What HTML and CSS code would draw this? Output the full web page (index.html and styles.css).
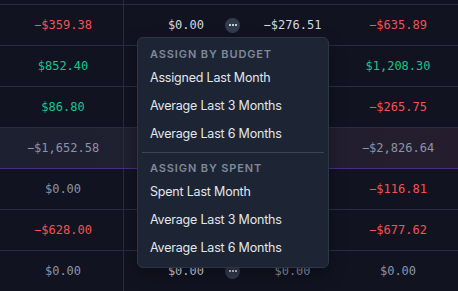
FILE: index.html
```html
<!DOCTYPE html>
<html lang="en">
<head>
    <meta charset="UTF-8">
    <meta name="viewport" content="width=device-width, initial-scale=1.0">
    <title>Budget</title>
    <link rel="stylesheet" href="styles.css">
</head>
<body>
    <div class="budget">
        <div class="row row-stub">
            <div class="cell cell-cat"></div><div class="cell"></div><div class="cell"></div><div class="cell"></div>
        </div>
        <div class="row">
            <div class="cell cell-cat amt neg">−$359.38</div>
            <div class="cell cell-assign">
                <span class="amt light">$0.00</span>
                <button class="more"><svg width="8" height="2" viewBox="0 0 8 2"><rect x="0" y="0" width="2" height="2"/><rect x="3" y="0" width="2" height="2"/><rect x="6" y="0" width="2" height="2"/></svg></button>
            </div>
            <div class="cell cell-act amt light">−$276.51</div>
            <div class="cell cell-avail amt neg">−$635.89</div>
        </div>
        <div class="row">
            <div class="cell cell-cat amt pos">$852.40</div>
            <div class="cell cell-assign"></div>
            <div class="cell cell-act"></div>
            <div class="cell cell-avail amt pos">$1,208.30</div>
        </div>
        <div class="row">
            <div class="cell cell-cat amt pos">$86.80</div>
            <div class="cell cell-assign"></div>
            <div class="cell cell-act"></div>
            <div class="cell cell-avail amt neg">−$265.75</div>
        </div>
        <div class="row row-group">
            <div class="cell cell-cat amt muted">−$1,652.58</div>
            <div class="cell cell-assign"></div>
            <div class="cell cell-act"></div>
            <div class="cell cell-avail amt muted">−$2,826.64</div>
        </div>
        <div class="row">
            <div class="cell cell-cat amt muted">$0.00</div>
            <div class="cell cell-assign"></div>
            <div class="cell cell-act"></div>
            <div class="cell cell-avail amt neg">−$116.81</div>
        </div>
        <div class="row">
            <div class="cell cell-cat amt neg">−$628.00</div>
            <div class="cell cell-assign"></div>
            <div class="cell cell-act"></div>
            <div class="cell cell-avail amt neg">−$677.62</div>
        </div>
        <div class="row">
            <div class="cell cell-cat amt muted">$0.00</div>
            <div class="cell cell-assign">
                <span class="amt light">$0.00</span>
                <button class="more"><svg width="8" height="2" viewBox="0 0 8 2"><rect x="0" y="0" width="2" height="2"/><rect x="3" y="0" width="2" height="2"/><rect x="6" y="0" width="2" height="2"/></svg></button>
            </div>
            <div class="cell cell-act amt muted">$0.00</div>
            <div class="cell cell-avail amt muted">$0.00</div>
        </div>
    </div>

    <div class="assign-menu">
        <div class="menu-heading">Assign by budget</div>
        <div class="menu-item">Assigned Last Month</div>
        <div class="menu-item">Average Last 3 Months</div>
        <div class="menu-item">Average Last 6 Months</div>
        <div class="menu-divider"></div>
        <div class="menu-heading">Assign by spent</div>
        <div class="menu-item">Spent Last Month</div>
        <div class="menu-item">Average Last 3 Months</div>
        <div class="menu-item">Average Last 6 Months</div>
    </div>
</body>
</html>
```

FILE: styles.css
```css
body {
    margin: 0;
    background-color: #111321;
    font-family: Inter, "Noto Sans", sans-serif;
    overflow: hidden;
    position: relative;
    height: 291px;
}
.row {
    display: grid;
    grid-template-columns: 124px 125px 87px 122px;
    height: 41px;
    box-sizing: border-box;
    border-bottom: 1px solid #262e3e;
}
.row-stub {
    height: 5px;
}
.row-group {
    background: linear-gradient(90deg, #1d2030 0%, #201f30 55%, #251d2d 100%);
    border-bottom-color: #4a2d86;
}
.cell {
    display: flex;
    align-items: center;
    justify-content: center;
}
.cell-cat {
    border-right: 1px solid #262e3e;
    padding-left: 3px;
}
.cell-assign {
    justify-content: flex-end;
    padding-right: 9px;
    gap: 21px;
}
.cell-avail {
    padding-left: 2px;
}
.amt {
    font-family: "DejaVu Sans Mono", "Liberation Mono", monospace;
    font-size: 12px;
}
.neg {
    color: #f05353;
}
.pos {
    color: #14c68c;
}
.muted {
    color: #8a94a7;
}
.light {
    color: #d3d8e0;
}
.more {
    width: 15px;
    height: 15px;
    padding: 0;
    border: none;
    border-radius: 50%;
    background-color: #333c4d;
    display: flex;
    align-items: center;
    justify-content: center;
}
.more svg {
    fill: #c4cbd6;
    display: block;
}
.assign-menu {
    position: absolute;
    left: 137px;
    top: 37px;
    width: 192px;
    box-sizing: border-box;
    padding: 5px 0 5px;
    background-color: #1d2433;
    border: 1px solid #2d3647;
    border-radius: 6px;
    box-shadow: 0 6px 16px rgba(0, 0, 0, 0.35);
}
.menu-heading {
    padding: 3px 12px 2px;
    line-height: 16px;
    font-size: 11px;
    font-weight: 600;
    letter-spacing: 0.08em;
    text-transform: uppercase;
    color: #7f899b;
}
.menu-item {
    padding: 0 12px;
    line-height: 28px;
    font-size: 12.5px;
    letter-spacing: -0.2px;
    color: #e2e6ec;
}
.menu-divider {
    height: 1px;
    margin: 4px 4px 4px;
    background-color: #394457;
}
```
